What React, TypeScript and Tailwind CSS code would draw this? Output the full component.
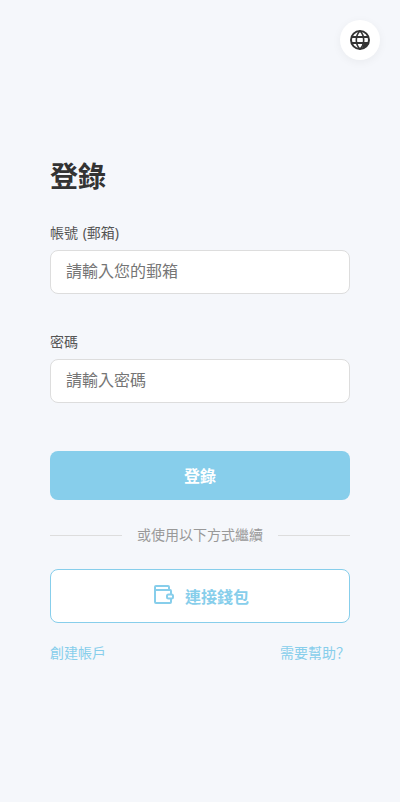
function GlobeIcon() {
  return (
    <svg width="24" height="24" viewBox="0 0 24 24" fill="none" stroke="currentColor" strokeWidth="2">
      <circle cx="12" cy="12" r="9" />
      <path d="M12 3c-2.500 2.300-3.700 5.500-3.700 9s1.200 6.700 3.700 9c2.500-2.300 3.700-5.500 3.700-9S14.500 5.300 12 3z" strokeWidth="1.600" />
      <path d="M3.500 9h17M3.500 15h17" />
      <path d="M15.500 15.500H20L17 19.500L14 20.500z" fill="currentColor" stroke="none" />
    </svg>
  );
}

function WalletIcon() {
  return (
    <svg width="24" height="24" viewBox="0 0 24 24" fill="none" stroke="currentColor" strokeWidth="2">
      <path d="M17 8V5a1 1 0 0 0-1-1H4a1 1 0 0 0-1 1v15a1 1 0 0 0 1 1h14a1 1 0 0 0 1-1v-3" />
      <path d="M3 8h15a1 1 0 0 1 1 1v3" />
      <rect x="15" y="12.500" width="6" height="4" rx="1.500" />
    </svg>
  );
}

interface FieldProps {
  label: string;
  type: string;
  placeholder: string;
}

function Field({ label, type, placeholder }: FieldProps) {
  return (
    <label className="block">
      <span className="block text-sm leading-[17px] text-[#555] [word-spacing:1px]">{label}</span>
      <input
        type={type}
        placeholder={placeholder}
        className="mt-[9px] block h-11 w-full rounded-lg border border-[#ddd] bg-white px-[15px] pb-0.5 text-base placeholder:text-[#757575]"
      />
    </label>
  );
}

export default function App() {
  return (
    <div className="relative h-[802px] bg-[#f5f7fb] px-[50px] pt-[156px] font-['Noto_Sans','Noto_Sans_CJK_TC',sans-serif]">
      {/* 語言切換 */}
      <button className="absolute top-5 right-5 flex h-10 w-10 items-center justify-center rounded-full bg-white text-[#333] shadow-[0_2px_10px_rgba(0,0,0,0.05)]">
        <GlobeIcon />
      </button>

      <h1 className="h-10 text-[28px] leading-10 font-bold text-[#333]">登錄</h1>

      {/* 登錄表單 */}
      <form className="mt-7">
        <div className="flex flex-col gap-[39px]">
          <Field label="帳號 (郵箱)" type="email" placeholder="請輸入您的郵箱" />
          <Field label="密碼" type="password" placeholder="請輸入密碼" />
        </div>
        <button type="button" className="mt-12 block h-[49px] w-full rounded-lg bg-[#87ceeb] text-base font-bold text-white">
          登錄
        </button>
      </form>

      {/* 分隔線 */}
      <div className="mt-[25px] flex h-5 items-center gap-[15px] text-sm text-[#999]">
        <span className="h-px flex-1 bg-[#ddd]"></span>
        <span>或使用以下方式繼續</span>
        <span className="h-px flex-1 bg-[#ddd]"></span>
      </div>

      <button className="mt-6 flex h-[54px] w-full items-center justify-center gap-[9px] rounded-lg border border-[#87ceeb] bg-white pl-px text-base font-bold text-[#87ceeb]">
        <span className="pb-1">
          <WalletIcon />
        </span>
        <span className="pt-px">連接錢包</span>
      </button>

      <div className="mt-5 flex justify-between text-sm text-[#87ceeb]">
        <a href="#">創建帳戶</a>
        <a href="#" className="font-['Noto_Sans','Noto_Sans_CJK_SC',sans-serif]">需要幫助？</a>
      </div>
    </div>
  );
}
